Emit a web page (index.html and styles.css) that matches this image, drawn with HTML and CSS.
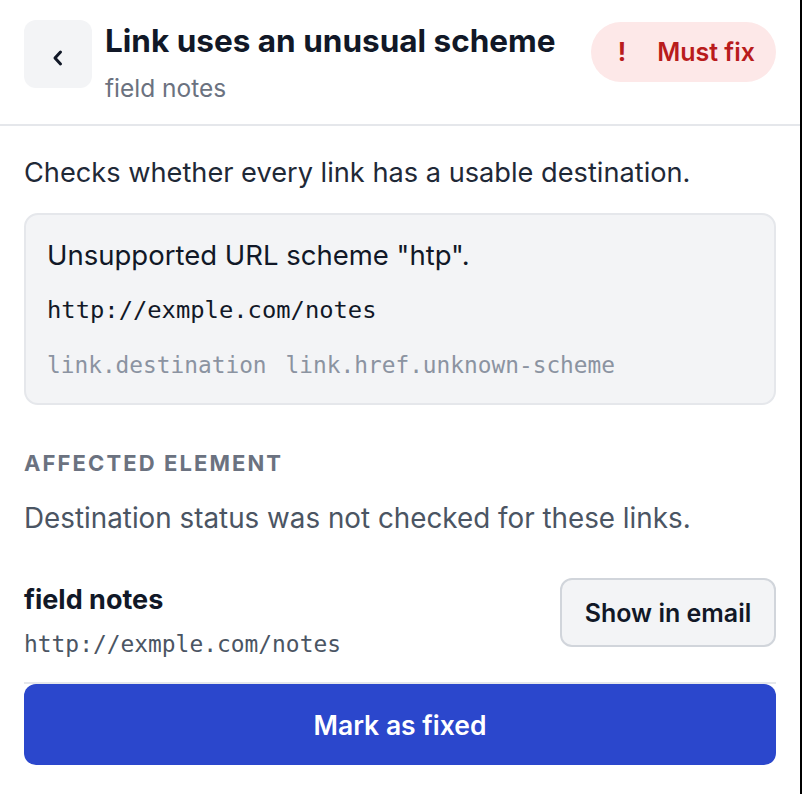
FILE: index.html
```html
<!DOCTYPE html>
<html>
<head>
<meta charset="utf-8">
<link rel="stylesheet" href="styles.css">
</head>
<body>
<div class="panel">
  <header class="header">
    <button class="back" aria-label="Back">
      <svg class="chev" width="14" height="18" viewBox="0 0 14 18"><path d="M9.5 3 L4 9 L9.5 15" fill="none" stroke="#111827" stroke-width="3" stroke-linecap="round" stroke-linejoin="round"/></svg>
    </button>
    <div class="titles">
      <h1 class="title">Link uses an unusual scheme</h1>
      <div class="subtitle">field notes</div>
    </div>
    <div class="badge"><span class="bang">!</span><span>Must fix</span></div>
  </header>
  <main class="body">
    <p class="desc">Checks whether every link has a usable destination.</p>
    <div class="card">
      <div class="msg">Unsupported URL scheme "htp".</div>
      <div class="url">http://exmple.com/notes</div>
      <div class="codes"><span>link.destination</span><span>link.href.unknown-scheme</span></div>
    </div>
    <div class="section-label">AFFECTED ELEMENT</div>
    <p class="note">Destination status was not checked for these links.</p>
    <div class="element">
      <div class="el-info">
        <div class="el-name">field notes</div>
        <div class="el-url">http://exmple.com/notes</div>
      </div>
      <button class="show">Show in email</button>
    </div>
    <div class="footer">
      <button class="primary">Mark as fixed</button>
    </div>
  </main>
</div>
</body>
</html>
```

FILE: styles.css
```css
* { box-sizing: border-box; }
html, body { margin: 0; padding: 0; }
body {
  background: #000;
  font-family: Inter, "Noto Sans", sans-serif;
  color: #111827;
  width: 802px;
  height: 794px;
}
.panel {
  width: 800px;
  height: 794px;
  background: #fff;
}
.header {
  display: flex;
  align-items: flex-start;
  padding: 20px 24px 0 24px;
  height: 126px;
  border-bottom: 2px solid #e5e7eb;
}
.back {
  width: 68px;
  height: 68px;
  border: none;
  border-radius: 12px;
  background: #f3f4f6;
  display: flex;
  align-items: center;
  justify-content: center;
  padding: 0;
  flex: none;
}
.chev { margin-top: 8px; }
.titles {
  margin-left: 13px;
  flex: 1;
}
.title {
  margin: 2px 0 0 0;
  font-size: 31.5px;
  line-height: 38px;
  font-weight: 700;
  color: #111827;
  white-space: nowrap;
}
.subtitle {
  margin-top: 13px;
  font-size: 24.5px;
  line-height: 30px;
  color: #6b7280;
}
.badge {
  margin-top: 2px;
  height: 60px;
  padding: 0 21px 0 27px;
  border-radius: 30px;
  background: #fde8e8;
  color: #b91c1c;
  font-size: 25px;
  font-weight: 600;
  display: flex;
  align-items: center;
  gap: 31px;
  flex: none;
}
.bang { font-weight: 700; }
.body {
  padding: 0 24px;
}
.desc {
  margin: 0;
  padding-top: 28.5px;
  font-size: 27.2px;
  line-height: 36px;
  color: #1f2937;
}
.card {
  margin-top: 22.5px;
  background: #f3f4f6;
  border: 2px solid #e5e7eb;
  border-radius: 14px;
  padding: 23px 21px 23px 21px;
}
.msg {
  font-size: 27.5px;
  line-height: 34px;
  color: #111827;
}
.url {
  margin-top: 23px;
  font-family: "DejaVu Sans Mono", "Liberation Mono", monospace;
  font-size: 23.8px;
  line-height: 30px;
  color: #111827;
}
.codes {
  margin-top: 25px;
  display: flex;
  gap: 19px;
  font-family: "DejaVu Sans Mono", "Liberation Mono", monospace;
  font-size: 22.8px;
  line-height: 30px;
  color: #8b93a1;
}
.section-label {
  margin-top: 45px;
  font-size: 22px;
  line-height: 26px;
  font-weight: 700;
  letter-spacing: 2.1px;
  color: #6b7280;
}
.note {
  margin: 24px 0 0 0;
  font-size: 27.8px;
  line-height: 36px;
  color: #4b5563;
}
.element {
  margin-top: 42px;
  display: flex;
  justify-content: space-between;
  align-items: flex-start;
  padding-bottom: 23px;
}
.el-name {
  margin-top: 5px;
  font-size: 27px;
  line-height: 34px;
  font-weight: 700;
  color: #111827;
}
.el-url {
  margin-top: 12px;
  font-family: "DejaVu Sans Mono", "Liberation Mono", monospace;
  font-size: 22.9px;
  line-height: 30px;
  color: #4b5563;
}
.show {
  width: 216px;
  height: 69px;
  border: 2px solid #d1d5db;
  border-radius: 12px;
  background: #f3f4f6;
  font-family: Inter, "Noto Sans", sans-serif;
  font-size: 25px;
  font-weight: 600;
  color: #111827;
  padding: 0;
}
.footer {
  border-top: 2px solid #e5e7eb;
}
.primary {
  display: block;
  width: 100%;
  height: 81px;
  border: none;
  border-radius: 12px;
  background: #2b47cc;
  color: #fff;
  font-family: Inter, "Noto Sans", sans-serif;
  font-size: 26.5px;
  font-weight: 600;
}
```
